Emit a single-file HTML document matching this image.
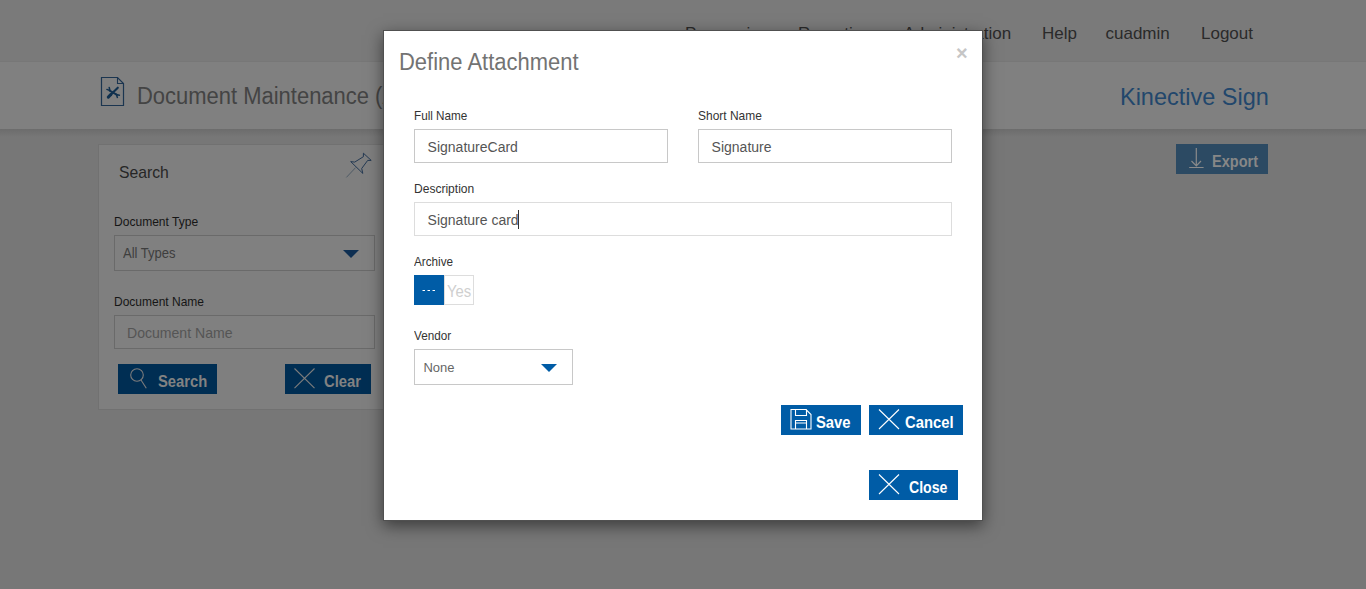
<!DOCTYPE html>
<html><head><meta charset="utf-8"><title>Define Attachment</title>
<style>
html,body{margin:0;padding:0;}
body{width:1366px;height:589px;overflow:hidden;position:relative;background:#777777;font-family:"Liberation Sans",sans-serif;}
.t{position:absolute;white-space:nowrap;line-height:1;transform-origin:0 50%;}
.r{position:absolute;}
svg{position:absolute;overflow:visible;}
</style></head><body>
<div class="r" style="left:0px;top:0px;width:1366px;height:61px;background:#7a7a7a;"></div>
<div class="r" style="left:0px;top:61px;width:1366px;height:1px;background:#777777;"></div>
<div class="r" style="left:0px;top:62px;width:1366px;height:67px;background:#808080;"></div>
<div class="r" style="left:0px;top:129px;width:1366px;height:8px;background:linear-gradient(#6c6c6c,#777777);"></div>
<div class="t" style="left:685.00px;top:24.61px;font-size:17px;color:#2a2a2a;">Processing</div>
<div class="t" style="left:798.00px;top:24.61px;font-size:17px;color:#2a2a2a;">Reporting</div>
<div class="t" style="left:903.50px;top:24.61px;font-size:17px;color:#2a2a2a;">Administration</div>
<div class="t" style="left:1042.00px;top:24.61px;font-size:17px;color:#2a2a2a;">Help</div>
<div class="t" style="left:1105.50px;top:24.61px;font-size:17px;color:#2a2a2a;">cuadmin</div>
<div class="t" style="left:1201.00px;top:24.61px;font-size:17px;color:#2a2a2a;">Logout</div>
<svg style="left:0;top:0" width="1366" height="589" viewBox="0 0 1366 589">
<path d="M101.5 77.5 H117.5 L123.5 83.5 V105.5 H101.5 Z" fill="none" stroke="#1b3550" stroke-width="1.2"/>
<path d="M117.5 77.5 V83.5 H123.5" fill="none" stroke="#1b3550" stroke-width="1.1"/>
<path d="M109.6 90.6 L116.6 94.6" stroke="#10314f" stroke-width="1.8" stroke-linecap="round"/>
<path d="M110 90.6 L106.9 89.4 M110 90.6 L109.2 87.5 M116.3 94.6 L119.4 95.2 M116.3 94.6 L117.4 97.4" stroke="#10314f" stroke-width="1.5" stroke-linecap="round"/>
<path d="M117.8 87.7 L110.4 95" stroke="#10314f" stroke-width="2.1" stroke-linecap="round"/>
<path d="M111 94.4 L108.3 97.1" stroke="#10314f" stroke-width="3" stroke-linecap="round"/>
</svg>
<div class="t" style="left:137.30px;top:84.83px;font-size:23px;color:#444444;transform:scaleX(0.955);">Document Maintenance (Attachments)</div>
<div class="t" style="left:1120.00px;top:84.68px;font-size:24px;color:#22476c;transform:scaleX(0.978);">Kinective Sign</div>
<div class="r" style="left:1176px;top:144px;width:92px;height:30px;background:#2c4a63;"></div>
<svg style="left:0;top:0" width="1366" height="589" viewBox="0 0 1366 589">
<path d="M1196.3 148 V166 M1191.5 161 L1196.3 166 L1201 161 M1189.2 167.5 H1203.6" fill="none" stroke="#8a8a8a" stroke-width="1.2"/>
</svg>
<div class="t" style="left:1212.00px;top:152.61px;font-size:17px;color:#878787;font-weight:700;transform:scaleX(0.855);">Export</div>
<div class="r" style="left:98px;top:144px;width:302px;height:266px;background:#7f7f7f;border:1px solid #717171;box-sizing:border-box;"></div>
<div class="t" style="left:119.00px;top:163.61px;font-size:17px;color:#262626;transform:scaleX(0.925);">Search</div>
<svg style="left:0;top:0" width="1366" height="589" viewBox="0 0 1366 589">
<path d="M350.7 161.6 L354.7 162.1 L363.4 156.7 L363.4 153.2 L371.2 160.4 L367.7 160.4 L361.7 168.5 L362.8 173.4 Z" fill="none" stroke="#1e3550" stroke-width="0.95" stroke-linejoin="miter"/>
<path d="M355.6 167.6 L346.4 177.4" stroke="#3a4a5a" stroke-width="0.7"/>
</svg>
<div class="t" style="left:114.00px;top:214.99px;font-size:13px;color:#161616;transform:scaleX(0.927);">Document Type</div>
<div class="r" style="left:114px;top:235px;width:261px;height:36px;background:#808080;border:1px solid #6a6a6a;box-sizing:border-box;"></div>
<div class="t" style="left:122.50px;top:246.15px;font-size:14px;color:#3e3e3e;transform:scaleX(0.93);">All Types</div>
<svg style="left:0;top:0" width="1366" height="589" viewBox="0 0 1366 589"><path d="M343 250 H359 L351 258 Z" fill="#0e2f52"/></svg>
<div class="t" style="left:114.00px;top:294.99px;font-size:13px;color:#161616;transform:scaleX(0.923);">Document Name</div>
<div class="r" style="left:114px;top:315px;width:261px;height:34px;background:#808080;border:1px solid #6a6a6a;box-sizing:border-box;"></div>
<div class="t" style="left:127.00px;top:325.72px;font-size:14.5px;color:#555555;transform:scaleX(0.97);">Document Name</div>
<div class="r" style="left:118px;top:364px;width:99px;height:30px;background:#002e53;"></div>
<div class="r" style="left:285px;top:364px;width:86px;height:30px;background:#002e53;"></div>
<svg style="left:0;top:0" width="1366" height="589" viewBox="0 0 1366 589">
<circle cx="137" cy="375" r="6.3" fill="none" stroke="#7c7c7c" stroke-width="1.1"/>
<path d="M141 380 L146.3 388.2" stroke="#7c7c7c" stroke-width="1.1"/>
<path d="M294.5 368.5 L314.5 388.2 M314.5 368.5 L294.5 388.2" stroke="#7c7c7c" stroke-width="1.1"/>
</svg>
<div class="t" style="left:157.70px;top:373.01px;font-size:17px;color:#828282;font-weight:700;transform:scaleX(0.87);">Search</div>
<div class="t" style="left:324.00px;top:373.01px;font-size:17px;color:#828282;font-weight:700;transform:scaleX(0.87);">Clear</div>
<div class="r" style="left:383px;top:30px;width:600px;height:491px;background:#ffffff;border:1px solid #505050;box-sizing:border-box;box-shadow:0 5px 15px rgba(0,0,0,0.5);"></div>
<div class="t" style="left:399.00px;top:50.53px;font-size:23px;color:#737373;transform:scaleX(0.955);">Define Attachment</div>
<div class="t" style="left:956.00px;top:43.07px;font-size:20px;color:#c6c6c6;font-weight:700;">&#215;</div>
<div class="t" style="left:414.00px;top:108.99px;font-size:13px;color:#333333;transform:scaleX(0.9);">Full Name</div>
<div class="r" style="left:414px;top:129px;width:254px;height:34px;border:1px solid #c8c8c8;box-sizing:border-box;"></div>
<div class="t" style="left:427.60px;top:140.15px;font-size:14px;color:#555555;">SignatureCard</div>
<div class="t" style="left:698.00px;top:108.99px;font-size:13px;color:#333333;transform:scaleX(0.92);">Short Name</div>
<div class="r" style="left:698px;top:129px;width:254px;height:34px;border:1px solid #c8c8c8;box-sizing:border-box;"></div>
<div class="t" style="left:711.60px;top:140.15px;font-size:14px;color:#555555;">Signature</div>
<div class="t" style="left:414.00px;top:181.99px;font-size:13px;color:#333333;transform:scaleX(0.926);">Description</div>
<div class="r" style="left:414px;top:202px;width:538px;height:34px;border:1px solid #dddddd;box-sizing:border-box;"></div>
<div class="t" style="left:427.60px;top:213.15px;font-size:14px;color:#555555;">Signature card</div>
<div class="r" style="left:518px;top:210px;width:1px;height:19px;background:#333333;"></div>
<div class="t" style="left:414.00px;top:254.99px;font-size:13px;color:#333333;transform:scaleX(0.9);">Archive</div>
<div class="r" style="left:414px;top:275px;width:30px;height:30px;background:#005ca6;"></div>
<div class="r" style="left:444px;top:275px;width:30px;height:30px;border:1px solid #dddddd;box-sizing:border-box;"></div>
<svg style="left:0;top:0" width="1366" height="589" viewBox="0 0 1366 589">
<path d="M422.5 290.5 H425 M427.5 290.5 H430 M432.5 290.5 H435" stroke="#ffffff" stroke-width="1"/>
</svg>
<div class="t" style="left:447.00px;top:284.45px;font-size:16px;color:#cfcfcf;transform:scaleX(0.93);">Yes</div>
<div class="t" style="left:413.80px;top:328.99px;font-size:13px;color:#333333;transform:scaleX(0.9);">Vendor</div>
<div class="r" style="left:414px;top:349px;width:159px;height:36px;border:1px solid #c8c8c8;box-sizing:border-box;"></div>
<div class="t" style="left:423.40px;top:360.99px;font-size:13px;color:#666666;">None</div>
<svg style="left:0;top:0" width="1366" height="589" viewBox="0 0 1366 589"><path d="M541 364 H557 L549 372 Z" fill="#005ca6"/></svg>
<div class="r" style="left:781px;top:405px;width:80px;height:30px;background:#005ca6;"></div>
<div class="r" style="left:869px;top:405px;width:94px;height:30px;background:#005ca6;"></div>
<div class="r" style="left:869px;top:470px;width:89px;height:30px;background:#005ca6;"></div>
<svg style="left:0;top:0" width="1366" height="589" viewBox="0 0 1366 589">
<path d="M791 409.5 H806 L811 414.5 V429 H791 Z" fill="none" stroke="#ffffff" stroke-width="1.1"/>
<path d="M795.5 409.5 V415.5 H806.5 V409.5" fill="none" stroke="#ffffff" stroke-width="1.1"/>
<path d="M795.5 429 V420.5 H806.5 V429 M795.5 423 H806.5" fill="none" stroke="#ffffff" stroke-width="1.1"/>
<path d="M879 409.5 L899 429 M899 409.5 L879 429" stroke="#ffffff" stroke-width="1.1"/>
<path d="M879 474.5 L899 494 M899 474.5 L879 494" stroke="#ffffff" stroke-width="1.1"/>
</svg>
<div class="t" style="left:816.40px;top:413.61px;font-size:17px;color:#ffffff;font-weight:700;transform:scaleX(0.87);">Save</div>
<div class="t" style="left:904.60px;top:413.61px;font-size:17px;color:#ffffff;font-weight:700;transform:scaleX(0.87);">Cancel</div>
<div class="t" style="left:908.50px;top:478.61px;font-size:17px;color:#ffffff;font-weight:700;transform:scaleX(0.83);">Close</div>
</body></html>
